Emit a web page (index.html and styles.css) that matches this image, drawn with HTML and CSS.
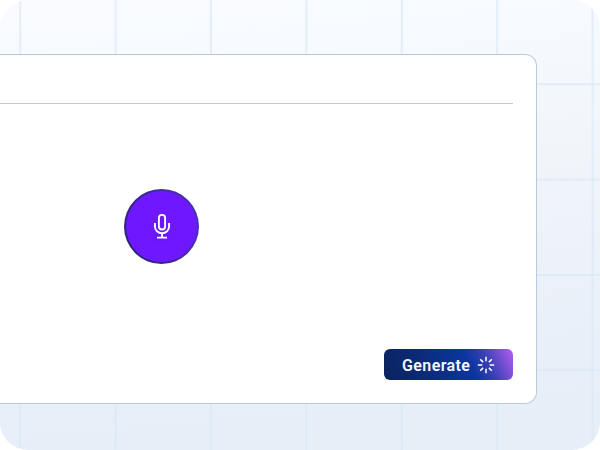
FILE: index.html
```html
<!DOCTYPE html>
<html lang="en">
<head>
<meta charset="utf-8">
<title>Generate</title>
<link rel="stylesheet" href="styles.css">
</head>
<body>
<main class="scene">
  <section class="panel">
    <div class="divider"></div>
    <div class="content">
      <button class="mic" aria-label="Record">
        <svg width="18" height="26" viewBox="0 0 18 26" fill="none" stroke="#fff" stroke-width="1.9">
          <rect x="5.9" y="1.9" width="6.2" height="14.6" rx="3.1"/>
          <path d="M1.9 10v3.2a7.1 7.1 0 0 0 14.2 0V10M9 20.3v4.4M4 24.6h10"/>
        </svg>
      </button>
    </div>
    <footer class="actions">
      <button class="generate">
        <span>Generate</span>
        <svg width="18" height="18" viewBox="0 0 18 18" fill="none" stroke="#fff" stroke-width="1.5">
          <path d="M9 .8v4.5M9 12.7v4.5M.8 9h4.5M12.7 9h4.5M3.2 3.2l2.9 2.9M11.9 11.9l2.9 2.9M14.8 3.2l-2.9 2.9M6.1 11.9l-2.9 2.9"/>
        </svg>
      </button>
    </footer>
  </section>
</main>
</body>
</html>
```
FILE: styles.css
```css
* { box-sizing: border-box; }
body { margin: 0; background: #fff; }
.scene {
  width: 600px;
  height: 450px;
  padding: 54px 63px 46px 0;
  border-radius: 28px;
  overflow: hidden;
  background:
    linear-gradient(90deg, #d8e8f7a6 2px, transparent 2.5px) 19.2px 0 / 95.4px 100%,
    linear-gradient(180deg, #d8e8f7a6 2px, transparent 2.5px) 0 83.2px / 100% 95.4px,
    linear-gradient(175deg, #f9fbff 0%, #f5f9fd 22%, #f0f4fa 45%, #e8eff8 82%, #e6eef7 100%);
}
.panel {
  height: 350px;
  display: flex;
  flex-direction: column;
  padding: 48px 23px 23px 0;
  background: #fff;
  border: 1px solid #b8cbd8;
  border-left: 0;
  border-radius: 0 12px 12px 0;
}
.divider { height: 1px; background: #bbcad7; }
.content { flex: 1; padding: 85px 0 0 124.4px; }
button { border: 0; padding: 0; display: flex; align-items: center; justify-content: center; }
.mic {
  width: 75px;
  height: 75px;
  padding-bottom: 1px;
  border: 2.5px solid transparent;
  border-radius: 50%;
  background:
    linear-gradient(#6f18ff, #6f18ff) padding-box,
    linear-gradient(70deg, #27236b, #3e2a9e 55%, #5030b9) border-box;
}
.mic svg { filter: drop-shadow(-1px 2px 2px #4b18c94d); }
.generate {
  width: 129px;
  height: 31px;
  margin-left: auto;
  padding: 0 18px;
  justify-content: space-between;
  border-radius: 6px;
  color: #f4f8ff;
  background: linear-gradient(65deg, #0b235d 0%, #0b2b78 30%, #0b369f 65%, #3740b4 78%, #aa5beb 98%);
  font: 600 16px/31px Roboto, sans-serif;
  letter-spacing: 0.4px;
}
.generate span { position: relative; top: 1px; }
.generate svg { flex: none; }
```
